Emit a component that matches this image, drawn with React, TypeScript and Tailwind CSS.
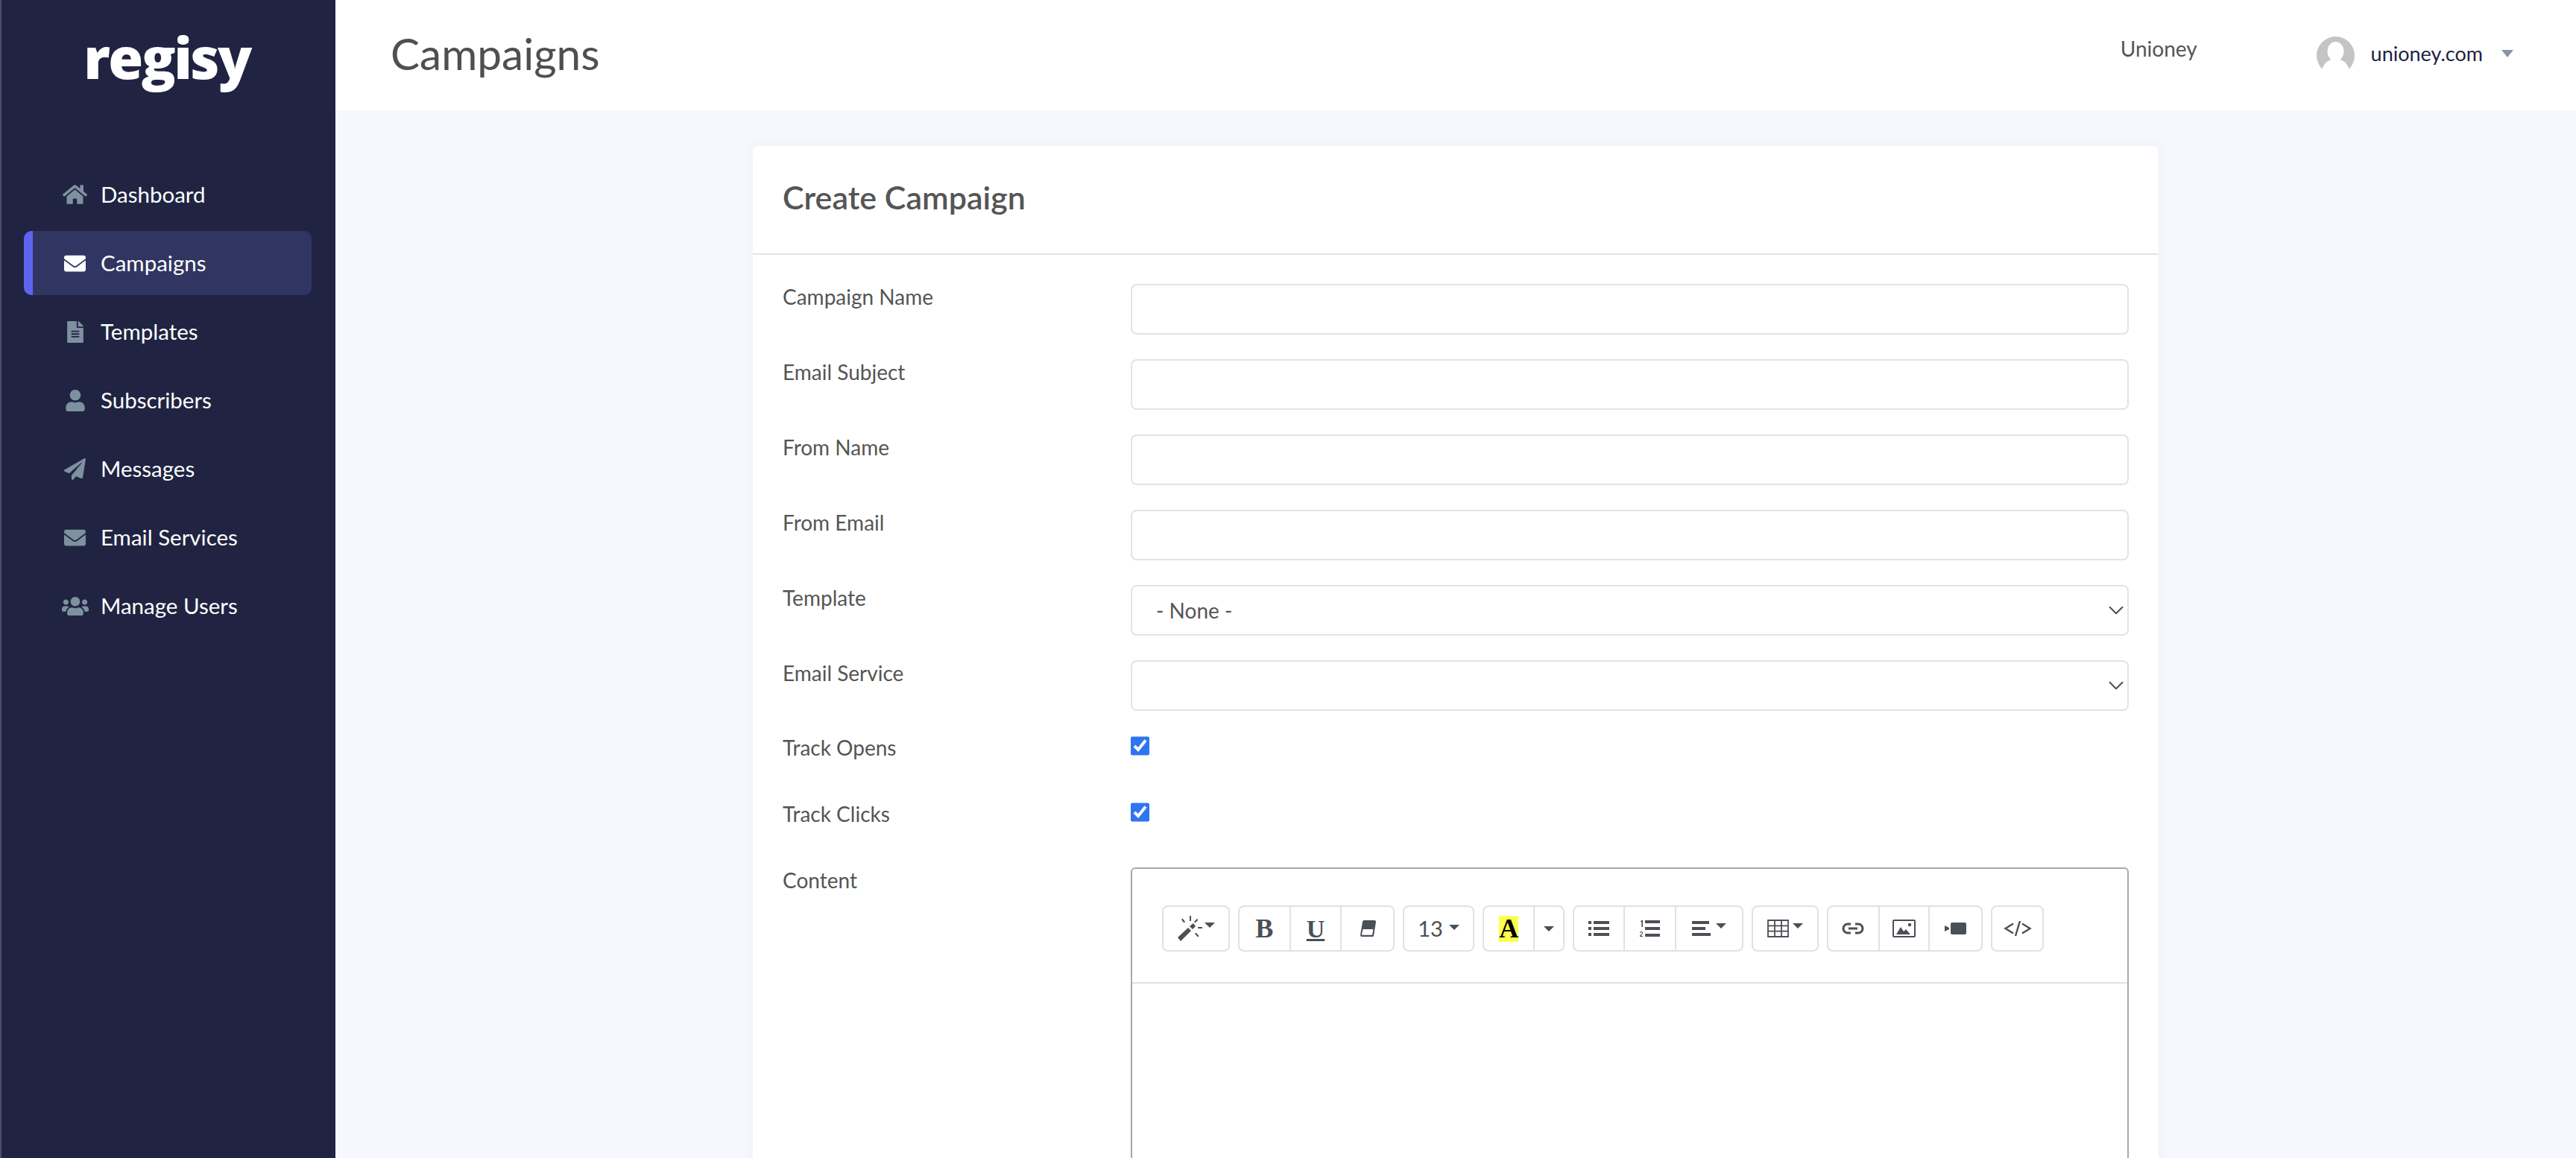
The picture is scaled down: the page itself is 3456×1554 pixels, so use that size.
import type { ReactNode } from "react";
import { FaEnvelope, FaFileAlt, FaHome, FaPaperPlane, FaUser, FaUsers } from "react-icons/fa";
import { ChevronDown } from "lucide-react";

const NAV = [
  { label: "Dashboard", icon: <FaHome className="w-[33px] h-[30px]" /> },
  { label: "Campaigns", icon: <FaEnvelope className="w-[29px] h-[29px]" />, active: true },
  { label: "Templates", icon: <FaFileAlt className="w-[22px] h-[29px]" /> },
  { label: "Subscribers", icon: <FaUser className="w-[26px] h-[29px]" /> },
  { label: "Messages", icon: <FaPaperPlane className="w-[29px] h-[29px]" /> },
  { label: "Email Services", icon: <FaEnvelope className="w-[29px] h-[29px]" /> },
  { label: "Manage Users", icon: <FaUsers className="w-[36px] h-[29px]" /> },
];

const INPUT = "block w-full h-[68px] rounded-lg border-2 border-[#e0e3e8] bg-white px-[32px] text-[28px] text-[#555] outline-none";

function Caret({ className = "" }: { className?: string }) {
  return (
    <svg viewBox="0 0 14 7" className={`w-[14px] h-[7px] fill-[#4b4f56] ${className}`}>
      <path d="M0 0h14L7 7z" />
    </svg>
  );
}

function Group({ children, className = "" }: { children: ReactNode; className?: string }) {
  return (
    <div className={`flex h-[62px] shrink-0 rounded-lg border-2 border-[#dee2e6] divide-x-2 divide-[#dee2e6] ${className}`}>
      {children}
    </div>
  );
}

function Btn({ w, children }: { w: string; children: ReactNode }) {
  return <div className={`flex items-center justify-center ${w}`}>{children}</div>;
}

function Row({ label, children, className = "", labelClass = "-mt-[2px]" }: { label: string; children: ReactNode; className?: string; labelClass?: string }) {
  return (
    <div className={`grid grid-cols-[467px_1fr] ${className}`}>
      <label className={`text-[28px] leading-[38px] text-[#555] ${labelClass}`}>{label}</label>
      <div>{children}</div>
    </div>
  );
}

function Select({ value }: { value?: string }) {
  return (
    <div className="relative">
      <select className={`${INPUT} appearance-none`} defaultValue={value}>
        <option>{value ?? ""}</option>
      </select>
      <ChevronDown className="absolute right-0 top-[17px] w-[34px] h-[34px] text-[#4b4f56] pointer-events-none" strokeWidth={1.4} />
    </div>
  );
}

function Toolbar() {
  return (
    <div className="flex items-center gap-[11px] h-[154px] pt-[8px] pl-[40px] border-b-2 border-[#dee2e6]">
      <Group className="w-[91px] items-center justify-center">
        <div className="flex items-center">
          <svg viewBox="0 0 34 34" className="w-[34px] h-[34px]" fill="#4b4f56">
            <path d="M0 29L14 16l4 4L4 34zM16 14l5-4 3 4-4 4z" />
            <path d="M16 0h2v7h-2zM5 5l1.6-1.4L10 8l-1.6 1.4zM26 4l1.5 1.4-4 4L22 8zM27 15h6v2h-6zM23 24l1.5-1.4 4 4.4-1.5 1.4z" />
          </svg>
          <Caret className="ml-[2px] -mt-[10px]" />
        </div>
      </Group>
      <Group className="w-[210px]">
        <Btn w="w-[70px]"><span className="font-['Liberation_Serif'] font-bold text-[36px] text-[#4b4f56]">B</span></Btn>
        <Btn w="w-[70px]"><span className="font-['Liberation_Serif'] font-bold text-[34px] underline underline-offset-2 text-[#4b4f56]">U</span></Btn>
        <Btn w="w-[70px]">
          <svg viewBox="0 0 24 24" className="w-[24px] h-[24px]">
            <path fill="#4b4f56" d="M7 1h14a2 2 0 0 1 2 2l-3 19a2 2 0 0 1-2 1H4a2 2 0 0 1-2-2L5 3a2 2 0 0 1 2-2z" />
            <path fill="#fff" d="M5.5 13h13.8l-1.2 7.8H3.9z" />
          </svg>
        </Btn>
      </Group>
      <Group className="w-[96px] items-center justify-center">
        <div className="flex items-center">
          <span className="text-[29px] text-[#4b4f56]">13</span>
          <Caret className="ml-[8px] -mt-[4px]" />
        </div>
      </Group>
      <Group className="w-[110px]">
        <Btn w="w-[71px]">
          <span className="w-[26px] h-[35px] bg-[#ffff4d] flex items-center justify-center font-['Liberation_Serif'] font-bold text-[36px] leading-none text-black">A</span>
        </Btn>
        <Btn w="w-[39px]"><Caret /></Btn>
      </Group>
      <Group className="w-[229px]">
        <Btn w="w-[69px]">
          <svg viewBox="0 0 28 22" className="w-[28px] h-[22px] fill-[#4b4f56]">
            <path d="M0 1h4v4H0zM7 1h21v4H7zM0 9h4v4H0zM7 9h21v4H7zM0 17h4v4H0zM7 17h21v4H7z" />
          </svg>
        </Btn>
        <Btn w="w-[70px]">
          <svg viewBox="0 0 28 24" className="w-[28px] h-[24px] fill-[#4b4f56]">
            <path d="M8 1h20v4H8zM8 10h20v4H8zM8 19h20v4H8z" />
            <path d="M3 1h2v9H3.4V3H2zM1 23v-1.3l2.8-3c.6-.7.3-1.6-.6-1.6-.7 0-1 .4-1.1 1H.9c.1-1.4 1-2.1 2.3-2.1 1.6 0 2.5 1.4 1.5 3L2.6 21.9H5V23z" />
          </svg>
        </Btn>
        <Btn w="w-[90px]">
          <div className="flex items-center gap-[7px]">
            <svg viewBox="0 0 25 22" className="w-[25px] h-[22px] fill-[#4b4f56]">
              <path d="M0 1h23v4H0zM0 9h18v4H0zM0 17h25v4H0z" />
            </svg>
            <Caret className="-mt-[8px]" />
          </div>
        </Btn>
      </Group>
      <Group className="w-[90px] items-center justify-center">
        <div className="flex items-center">
          <svg viewBox="0 0 29 24" className="w-[29px] h-[24px]" fill="none" stroke="#4b4f56">
            <path strokeWidth="1.8" d="M1 1h27v22H1zM1 8.3h27M1 15.6h27M10 1v22M19 1v22" />
          </svg>
          <Caret className="ml-[5px] -mt-[8px]" />
        </div>
      </Group>
      <Group className="w-[209px]">
        <Btn w="w-[70px]">
          <svg viewBox="0 0 30 16" className="w-[30px] h-[16px]" fill="none" stroke="#4b4f56" strokeWidth="3">
            <path d="M12 2H8a6 6 0 0 0 0 12h4M18 2h4a6 6 0 0 1 0 12h-4M9 8h12" />
          </svg>
        </Btn>
        <Btn w="w-[69px]">
          <svg viewBox="0 0 31 24" className="w-[31px] h-[24px]">
            <rect x="1" y="1" width="29" height="22" rx="1" fill="none" stroke="#4b4f56" strokeWidth="2" />
            <path fill="#4b4f56" d="M5 20l6-10 4 6 3-3 6 7z" />
            <circle cx="23" cy="7" r="2.2" fill="#4b4f56" />
          </svg>
        </Btn>
        <Btn w="w-[70px]">
          <svg viewBox="0 0 29 16" className="w-[29px] h-[16px] fill-[#4b4f56]">
            <path d="M0 4l6 3v2l-6 3zM8 2a2 2 0 0 1 2-2h17a2 2 0 0 1 2 2v12a2 2 0 0 1-2 2H10a2 2 0 0 1-2-2z" />
          </svg>
        </Btn>
      </Group>
      <Group className="w-[71px] items-center justify-center">
        <svg viewBox="0 0 38 20" className="w-[38px] h-[20px]" fill="none" stroke="#4b4f56" strokeWidth="2.4">
          <path d="M13 3.5L2.5 10 13 16.5M25 3.5L35.5 10 25 16.5M22 0l-6 20" />
        </svg>
      </Group>
    </div>
  );
}

export default function App() {
  return (
    <div className="flex h-[1554px] overflow-hidden font-['Lato','Noto_Sans',sans-serif]">
      <aside className="w-[450px] shrink-0 border-l-2 border-[#4a4e69] bg-[#202442]">
        <div className="h-[170px] flex justify-center pt-[32px] pr-[4px]">
          <span className="font-['Open_Sans'] font-extrabold text-[76px] leading-[90px] tracking-[-2.6px] text-white">regisy</span>
        </div>
        <nav className="pl-[30px] pr-[32px] pt-[48px] flex flex-col gap-[6px]">
          {NAV.map((n) => (
            <div
              key={n.label}
              className={`h-[86px] flex items-center rounded-[10px] border-l-[12px] ${n.active ? "bg-[#303661] border-[#5f64f0] text-white" : "border-transparent text-[#7d919f]"}`}
            >
              <span className="w-[91px] pl-[22px] flex items-center justify-center shrink-0">{n.icon}</span>
              <span className="text-[29.5px] text-white">{n.label}</span>
            </div>
          ))}
        </nav>
      </aside>

      <div className="flex-1 flex flex-col min-w-0">
        <header className="h-[148px] shrink-0 bg-white flex items-center pl-[74px] pr-[84px]">
          <h1 className="text-[58.5px] -mt-[4px] text-[#4f4f4f]">Campaigns</h1>
          <span className="ml-auto mb-[18px] text-[28px] text-[#555]">Unioney</span>
          <svg viewBox="0 0 51 51" className="ml-[160px] w-[51px] h-[51px]">
            <circle cx="25.5" cy="25.5" r="25.5" fill="#c4c4c4" />
            <ellipse cx="25.5" cy="20" rx="11" ry="13" fill="#fff" />
            <ellipse cx="25.5" cy="46" rx="18" ry="16" fill="#fff" />
          </svg>
          <span className="ml-[22px] -mt-[4px] text-[27px] text-[#1d2345]">unioney.com</span>
          <svg viewBox="0 0 16 10" className="ml-[25px] -mt-[4px] w-[16px] h-[10px] fill-[#8a93a3]">
            <path d="M0 0h16L8 10z" />
          </svg>
        </header>

        <main className="flex-1 bg-[#f5f8fe] pt-[48px] px-[560px] min-h-0">
          <section className="bg-white rounded-t-lg shadow-[0_0_20px_rgba(0,0,0,0.04)] h-[1400px]">
            <div className="h-[146px] flex items-center px-[40px] border-b-2 border-[#e0e3e8]">
              <h2 className="text-[43px] -mt-[5px] font-semibold text-[#555]">Create Campaign</h2>
            </div>
            <div className="px-[40px] pt-[39px]">
              <Row label="Campaign Name" className="mb-[33px]"><input className={INPUT} /></Row>
              <Row label="Email Subject" className="mb-[33px]"><input className={INPUT} /></Row>
              <Row label="From Name" className="mb-[33px]"><input className={INPUT} /></Row>
              <Row label="From Email" className="mb-[33px]"><input className={INPUT} /></Row>
              <Row label="Template" className="mb-[33px]"><Select value="- None -" /></Row>
              <Row label="Email Service" className="mb-[34px]"><Select /></Row>
              <Row label="Track Opens" className="h-[89px]" labelClass="-mt-[4px]">
                <input type="checkbox" defaultChecked className="block w-[25px] h-[26px] accent-[#2f74f0]" />
              </Row>
              <Row label="Track Clicks" className="h-[87px]" labelClass="-mt-[4px]">
                <input type="checkbox" defaultChecked className="block w-[25px] h-[26px] accent-[#2f74f0]" />
              </Row>
              <Row label="Content">
                <div className="h-[800px] rounded-md border-2 border-[#a9a9a9] bg-white">
                  <Toolbar />
                </div>
              </Row>
            </div>
          </section>
        </main>
      </div>
    </div>
  );
}
